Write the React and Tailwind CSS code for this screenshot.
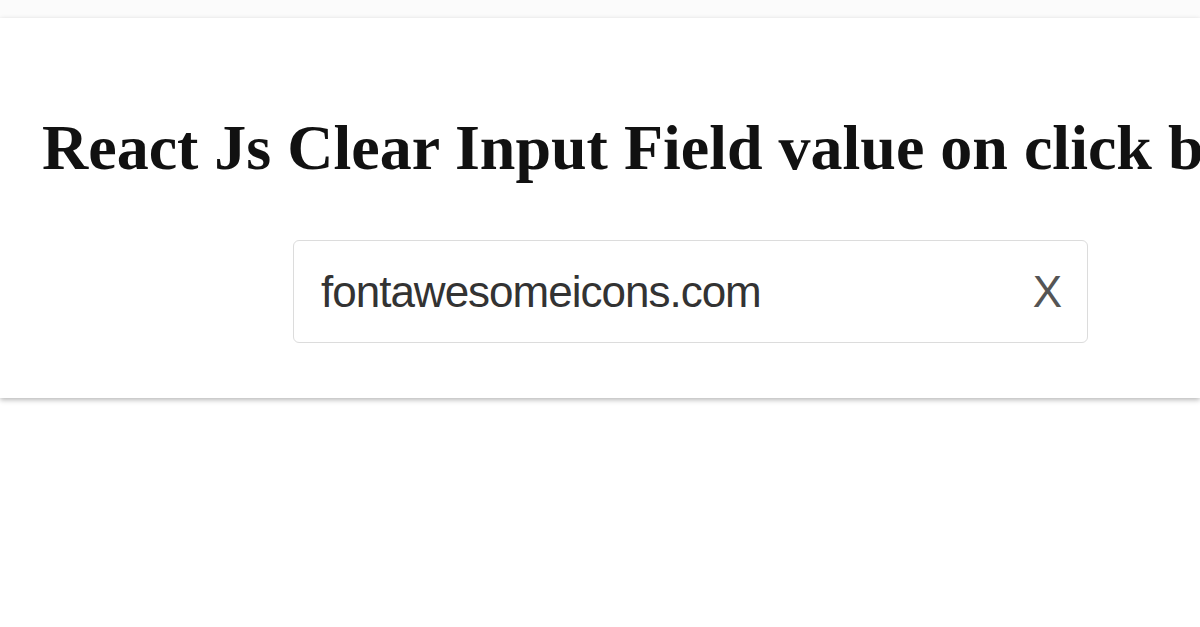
import { useState } from "react";

export default function App() {
  const [value, setValue] = useState("fontawesomeicons.com");

  return (
    <div className="w-[1200px] h-[627px] overflow-hidden bg-white">
      {/* top strip */}
      <div className="h-[18px] bg-[#fbfbfb]" />

      {/* Card */}
      <div className="h-[380px] bg-white shadow-[0_2px_5px_rgba(0,0,0,0.28)] pt-[98px] pl-[42px]">
        <h1
          className="whitespace-nowrap text-[64px] leading-none font-bold text-[#111]"
          style={{ fontFamily: '"Liberation Serif", "Times New Roman", serif' }}
        >
          React Js Clear Input Field value on click button
        </h1>

        <div className="ml-[251px] mt-[60px] w-[795px] h-[103px] flex items-center border border-[#dcdcdc] rounded-[6px] pl-[27px] pr-[25px]">
          <input
            type="text"
            value={value}
            onChange={(e) => setValue(e.target.value)}
            className="flex-1 min-w-0 bg-transparent outline-none text-[44px] leading-none tracking-[-1px] text-[#333]"
            style={{ fontFamily: '"Liberation Sans", Arial, sans-serif' }}
          />
          <button
            type="button"
            onClick={() => setValue("")}
            className="text-[44px] leading-none text-[#555]"
            style={{ fontFamily: '"Liberation Sans", Arial, sans-serif' }}
          >
            X
          </button>
        </div>
      </div>
    </div>
  );
}
